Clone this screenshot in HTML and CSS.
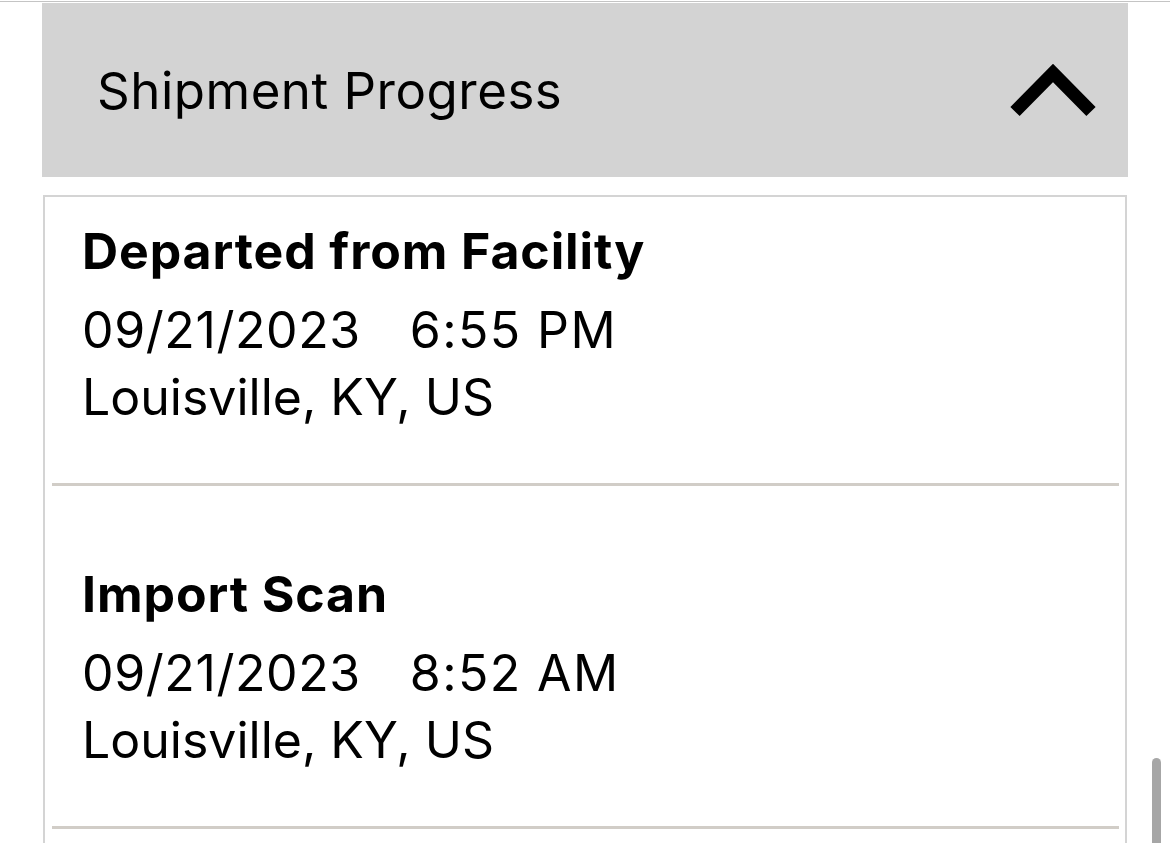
FILE: index.html
```html
<!DOCTYPE html>
<html lang="en">
<head>
<meta charset="utf-8">
<title>Shipment Progress</title>
<link rel="stylesheet" href="styles.css">
</head>
<body>
<div class="topline"></div>
<section class="panel">
  <div class="panel-header">
    <h2 class="panel-title">Shipment Progress</h2>
    <svg class="chevron" width="90" height="60" viewBox="0 0 90 60" aria-hidden="true">
      <polyline points="7,51.5 45,13 83,51.5" fill="none" stroke="#000" stroke-width="13" stroke-linejoin="miter" stroke-linecap="butt"/>
    </svg>
  </div>
  <div class="events">
    <div class="event">
      <div class="event-title">Departed from Facility</div>
      <div class="event-when"><span class="event-date">09/21/2023</span><span class="event-time">6:55 PM</span></div>
      <div class="event-where">Louisville, KY, US</div>
    </div>
    <div class="event">
      <div class="event-title">Import Scan</div>
      <div class="event-when"><span class="event-date">09/21/2023</span><span class="event-time">8:52 AM</span></div>
      <div class="event-where">Louisville, KY, US</div>
    </div>
  </div>
</section>
<div class="scrollbar"></div>
</body>
</html>
```
FILE: styles.css
```css
html, body {
  margin: 0;
  padding: 0;
  height: 843px;
  overflow: hidden;
  background: #fff;
}
body {
  font-family: Inter, "Liberation Sans", Arial, sans-serif;
  color: #000;
}
.topline {
  height: 1px;
  margin-top: 1px;
  background: #c4c4c4;
}
.panel {
  margin: 1px 42px 0 42px;
}
.panel-header {
  height: 174px;
  background: #d3d3d3;
  display: flex;
  align-items: center;
  justify-content: space-between;
  padding: 0 30px 0 55px;
}
.panel-title {
  margin: 0;
  font-size: 51px;
  font-weight: 400;
  line-height: 1;
  letter-spacing: 0.5px;
}
.chevron {
  display: block;
}
.events {
  margin: 18px 1px 0 1px;
  border: 2px solid #d4d4d4;
  border-bottom: none;
  padding: 0 6px 60px 7px;
}
.event {
  padding: 75px 0 52px 30px;
  border-bottom: 3px solid #d1cdc7;
}
.event:first-child {
  padding-top: 21px;
}
.event-title {
  font-size: 50px;
  font-weight: 700;
  line-height: 67px;
  margin-bottom: 12px;
  letter-spacing: 0.9px;
}
.event-when, .event-where {
  font-size: 50px;
  font-weight: 400;
  line-height: 67px;
}
.event-when {
  display: flex;
}
.event-date {
  letter-spacing: 0.6px;
}
.event-time {
  margin-left: 49px;
  letter-spacing: 1.4px;
}
.scrollbar {
  position: fixed;
  left: 1152px;
  top: 758px;
  width: 9px;
  height: 120px;
  border-radius: 5px;
  background: #a6a6a6;
}
```
